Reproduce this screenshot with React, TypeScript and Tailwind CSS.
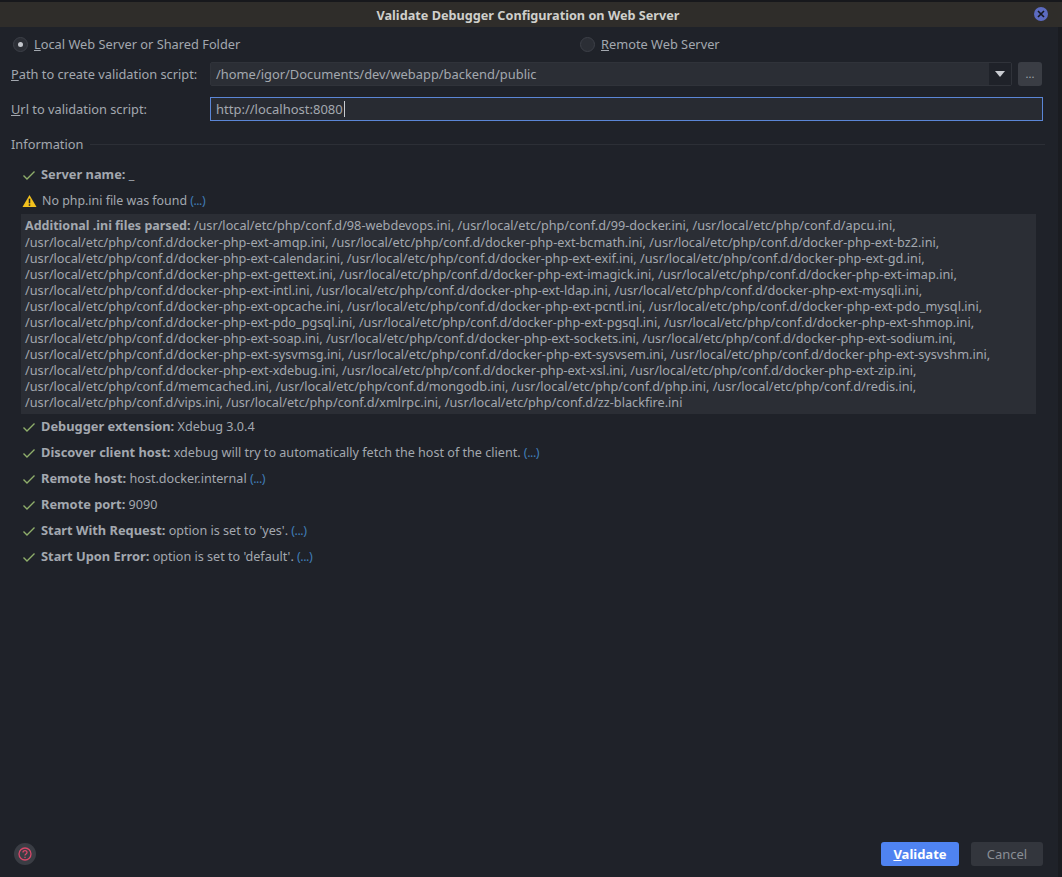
import React from "react";

const iniLines = [
  "/usr/local/etc/php/conf.d/98-webdevops.ini, /usr/local/etc/php/conf.d/99-docker.ini, /usr/local/etc/php/conf.d/apcu.ini,",
  "/usr/local/etc/php/conf.d/docker-php-ext-amqp.ini, /usr/local/etc/php/conf.d/docker-php-ext-bcmath.ini, /usr/local/etc/php/conf.d/docker-php-ext-bz2.ini,",
  "/usr/local/etc/php/conf.d/docker-php-ext-calendar.ini, /usr/local/etc/php/conf.d/docker-php-ext-exif.ini, /usr/local/etc/php/conf.d/docker-php-ext-gd.ini,",
  "/usr/local/etc/php/conf.d/docker-php-ext-gettext.ini, /usr/local/etc/php/conf.d/docker-php-ext-imagick.ini, /usr/local/etc/php/conf.d/docker-php-ext-imap.ini,",
  "/usr/local/etc/php/conf.d/docker-php-ext-intl.ini, /usr/local/etc/php/conf.d/docker-php-ext-ldap.ini, /usr/local/etc/php/conf.d/docker-php-ext-mysqli.ini,",
  "/usr/local/etc/php/conf.d/docker-php-ext-opcache.ini, /usr/local/etc/php/conf.d/docker-php-ext-pcntl.ini, /usr/local/etc/php/conf.d/docker-php-ext-pdo_mysql.ini,",
  "/usr/local/etc/php/conf.d/docker-php-ext-pdo_pgsql.ini, /usr/local/etc/php/conf.d/docker-php-ext-pgsql.ini, /usr/local/etc/php/conf.d/docker-php-ext-shmop.ini,",
  "/usr/local/etc/php/conf.d/docker-php-ext-soap.ini, /usr/local/etc/php/conf.d/docker-php-ext-sockets.ini, /usr/local/etc/php/conf.d/docker-php-ext-sodium.ini,",
  "/usr/local/etc/php/conf.d/docker-php-ext-sysvmsg.ini, /usr/local/etc/php/conf.d/docker-php-ext-sysvsem.ini, /usr/local/etc/php/conf.d/docker-php-ext-sysvshm.ini,",
  "/usr/local/etc/php/conf.d/docker-php-ext-xdebug.ini, /usr/local/etc/php/conf.d/docker-php-ext-xsl.ini, /usr/local/etc/php/conf.d/docker-php-ext-zip.ini,",
  "/usr/local/etc/php/conf.d/memcached.ini, /usr/local/etc/php/conf.d/mongodb.ini, /usr/local/etc/php/conf.d/php.ini, /usr/local/etc/php/conf.d/redis.ini,",
  "/usr/local/etc/php/conf.d/vips.ini, /usr/local/etc/php/conf.d/xmlrpc.ini, /usr/local/etc/php/conf.d/zz-blackfire.ini",
];

const Check = () => (
  <svg width="14" height="14" viewBox="0 0 14 14" fill="none" className="shrink-0">
    <path d="M1.5 7.5 L5 11 L12.5 3.5" stroke="#8fae6b" strokeWidth="1.4" />
  </svg>
);

const Warn = () => (
  <svg width="15" height="14" viewBox="0 0 16 14" className="shrink-0">
    <path d="M8 0.5 L15.5 13.5 H0.5 Z" fill="#f2c11d" />
    <rect x="7.2" y="4.5" width="1.6" height="5" fill="#1f2229" />
    <rect x="7.2" y="10.5" width="1.6" height="1.6" fill="#1f2229" />
  </svg>
);

const More = () => <span className="tracking-[-0.5px] text-[#3f7cb5]">(...)</span>;

function InfoRow({ label, children }: { label: string; children?: React.ReactNode }) {
  return (
    <div className="flex h-[26px] items-center pl-[22px] text-[12.6px]">
      <Check />
      <div className="ml-[5px] whitespace-nowrap">
        <span className="text-[12.85px] font-bold">{label}</span> {children}
      </div>
    </div>
  );
}

export default function App() {
  return (
    <div className="flex h-[877px] w-[1062px] flex-col overflow-hidden bg-[#1f2229] font-['Noto_Sans','Open_Sans',sans-serif] text-[12.8px] text-[#a3a8af]">
      {/* title bar */}
      <div className="relative flex h-[27px] shrink-0 items-center justify-center border-t-2 border-[#17181c] bg-[#2f2d2a] pr-[6px] pt-[2px] text-[12.7px] font-bold text-[#cfcfcb]">
        Validate Debugger Configuration on Web Server
        <div className="absolute right-[14px] top-[5px] flex h-[14px] w-[14px] items-center justify-center rounded-full bg-[#5c6bc0]">
          <svg width="8" height="8" viewBox="0 0 8 8">
            <path d="M1 1 L7 7 M7 1 L1 7" stroke="#15171c" strokeWidth="1.6" />
          </svg>
        </div>
      </div>

      <div className="flex flex-1 flex-col border-r-[4px] border-[#1a1c21]">
        {/* radios */}
        <div className="flex h-[35px] items-center pl-[13px]">
          <div className="flex w-[567px] items-center">
            <div className="flex h-[15px] w-[15px] items-center justify-center rounded-full border border-[#3d4048] bg-[#2b2e35]">
              <div className="h-[5px] w-[5px] rounded-full bg-[#c3c6cc]" />
            </div>
            <span className="ml-[6px]"><u>L</u>ocal Web Server or Shared Folder</span>
          </div>
          <div className="flex items-center">
            <div className="h-[15px] w-[15px] rounded-full border border-[#3d4048] bg-[#2b2e35]" />
            <span className="ml-[6px]"><u>R</u>emote Web Server</span>
          </div>
        </div>

        {/* path */}
        <div className="flex h-[24px] items-center pl-[11px]">
          <div className="w-[199px] pt-px"><u>P</u>ath to create validation script:</div>
          <div className="flex h-[24px] w-[802px] items-center justify-between rounded-[2px] border border-[#30333a] bg-[#2b2e35] pl-[5px] text-[12.9px]">
            <span className="pt-px">/home/igor/Documents/dev/webapp/backend/public</span>
            <div className="flex h-full w-[22px] items-center justify-center bg-[#1f2229]">
              <svg width="10" height="6" viewBox="0 0 10 6"><path d="M0 0 H10 L5 6 Z" fill="#c9ccd1" /></svg>
            </div>
          </div>
          <div className="ml-[6px] flex h-[24px] w-[24px] items-center justify-center rounded-[3px] bg-[#3a3d44] text-[11px]">...</div>
        </div>

        {/* url */}
        <div className="mt-[11px] flex h-[24px] items-center pl-[11px]">
          <div className="w-[199px] pt-px"><u>U</u>rl to validation script:</div>
          <div className="flex h-[24px] w-[833px] items-center border border-[#5b86d6] bg-[#282b32] pl-[5px] text-[13px]">
            <span className="pt-px">http://localhost:8080</span><span className="ml-px h-[16px] w-px bg-[#c9ccd1]" />
          </div>
        </div>

        {/* information */}
        <div className="mt-[11px] flex h-[24px] items-center pl-[11px] pr-[13px]">
          <span className="pt-px">Information</span>
          <div className="ml-[7px] h-px flex-1 bg-[#2c2f36]" />
        </div>

        <div className="mt-[6px]">
          <InfoRow label="Server name:">_</InfoRow>
        </div>
        <div className="flex h-[26px] items-center pl-[22px]">
          <Warn />
          <div className="ml-[5px] text-[12.4px]">No php.ini file was found <More /></div>
        </div>

        <div className="ml-[21px] mr-[22px] bg-[#2b2e35] px-[4px] pb-[4px] pt-[3px] text-[12.7px] leading-[16px] whitespace-nowrap">
          {iniLines.map((line, i) => (
            <div key={i}>
              {i === 0 && <span className="text-[12.5px] font-bold">Additional .ini files parsed: </span>}
              {line}
            </div>
          ))}
        </div>

        <InfoRow label="Debugger extension:">Xdebug 3.0.4</InfoRow>
        <InfoRow label="Discover client host:">xdebug will try to automatically fetch the host of the client. <More /></InfoRow>
        <InfoRow label="Remote host:">host.docker.internal <More /></InfoRow>
        <InfoRow label="Remote port:">9090</InfoRow>
        <InfoRow label="Start With Request:">option is set to 'yes'. <More /></InfoRow>
        <InfoRow label="Start Upon Error:">option is set to 'default'. <More /></InfoRow>

        {/* footer */}
        <div className="mt-auto flex h-[46px] items-center pl-[14px] pr-[15px]">
          <div className="flex h-[22px] w-[22px] items-center justify-center rounded-full bg-[#3a3d44]">
            <svg width="14" height="14" viewBox="0 0 14 14" fill="none" stroke="#d8486a" strokeWidth="1.3">
              <circle cx="7" cy="7" r="6" />
              <path d="M5 5.5 C5 3 9 3 9 5.5 C9 7 7 7 7 8.5" />
              <path d="M7 9.8 V11" />
            </svg>
          </div>
          <div className="ml-auto flex h-[24px] w-[78px] items-center justify-center rounded-[3px] bg-[#4f83f1] pt-px text-[13px] font-bold text-white">
            <span><u>V</u>alidate</span>
          </div>
          <div className="ml-[12px] flex h-[24px] w-[72px] items-center justify-center rounded-[3px] bg-[#33363d] pt-px text-[13px] text-[#8a8e95]">
            Cancel
          </div>
        </div>
      </div>
    </div>
  );
}
